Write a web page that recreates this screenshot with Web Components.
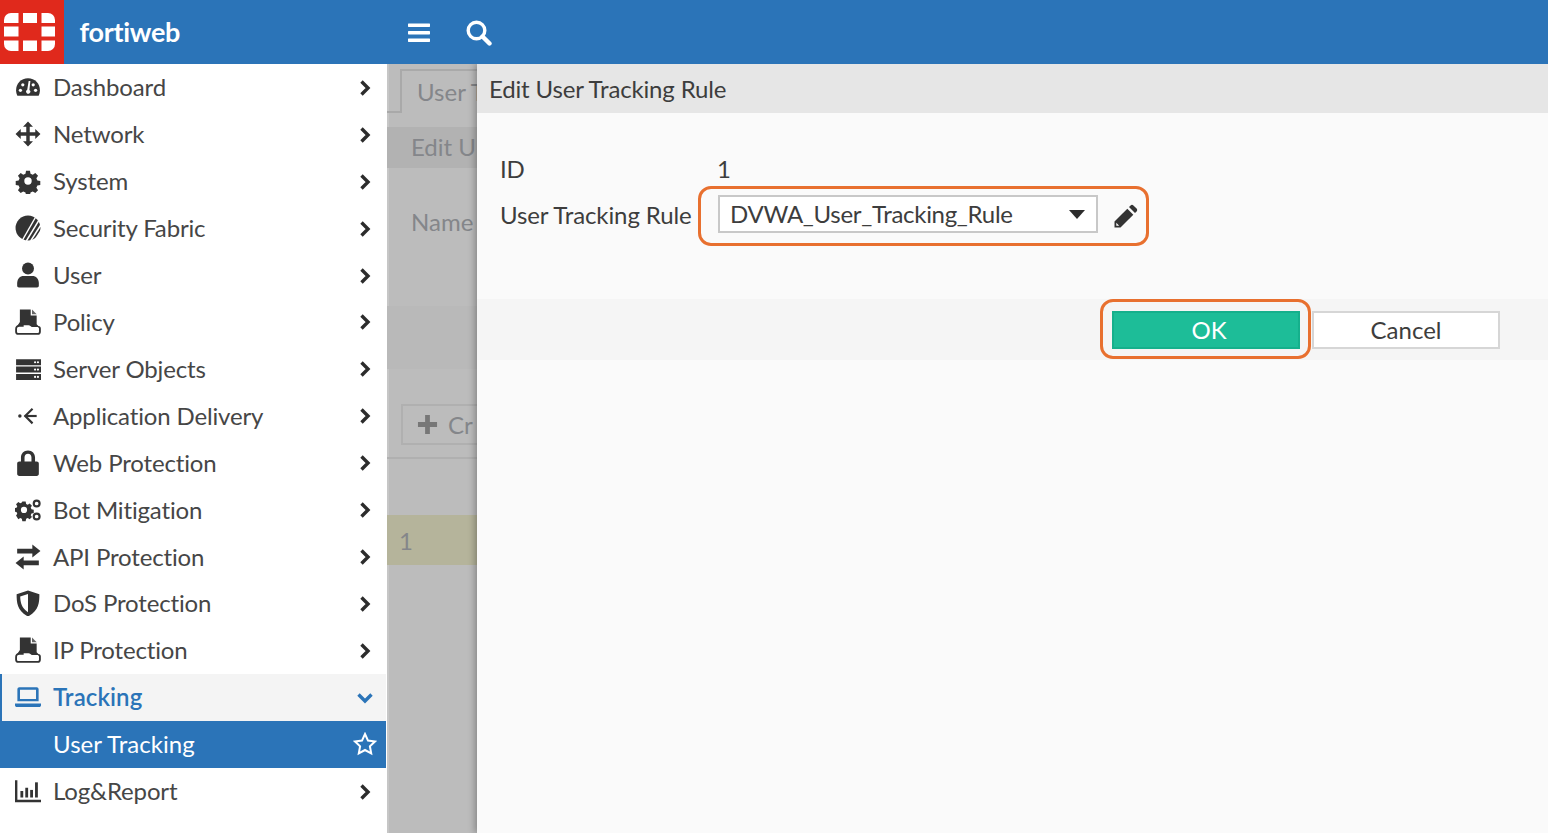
<!DOCTYPE html>
<html lang="en">
<head>
<meta charset="utf-8">
<title>FortiWeb - User Tracking</title>
<style>
  html, body { margin: 0; height: 100%; overflow: hidden; }
  body { font-family: Lato, "Liberation Sans", sans-serif; color: #3d3d3d; }
  fw-app { height: 833px; }
</style>
</head>
<body>
<fw-app>
  <fw-header slot="header">fortiweb</fw-header>
  <fw-sidebar slot="sidebar">
    <fw-nav-item icon="dashboard">Dashboard</fw-nav-item>
    <fw-nav-item icon="network">Network</fw-nav-item>
    <fw-nav-item icon="gear">System</fw-nav-item>
    <fw-nav-item icon="fabric">Security Fabric</fw-nav-item>
    <fw-nav-item icon="user">User</fw-nav-item>
    <fw-nav-item icon="policy">Policy</fw-nav-item>
    <fw-nav-item icon="server">Server Objects</fw-nav-item>
    <fw-nav-item icon="delivery">Application Delivery</fw-nav-item>
    <fw-nav-item icon="lock">Web Protection</fw-nav-item>
    <fw-nav-item icon="gears">Bot Mitigation</fw-nav-item>
    <fw-nav-item icon="exchange">API Protection</fw-nav-item>
    <fw-nav-item icon="shield">DoS Protection</fw-nav-item>
    <fw-nav-item icon="policy">IP Protection</fw-nav-item>
    <fw-nav-item icon="laptop" state="open">Tracking</fw-nav-item>
    <fw-nav-item state="current">User Tracking</fw-nav-item>
    <fw-nav-item icon="chart">Log&amp;Report</fw-nav-item>
  </fw-sidebar>
  <fw-dimmed-page slot="content"></fw-dimmed-page>
  <fw-dialog slot="content" heading="Edit User Tracking Rule">
    <fw-field label="ID"><span style="display:block;margin:-1px 0 1px">1</span></fw-field>
    <fw-field label="User Tracking Rule">
      <fw-callout>
        <fw-select>DVWA_User_Tracking_Rule</fw-select>
        <svg width="24" height="24" viewBox="0 0 24 24" style="margin:9px 0 0 16px;flex:none">
          <path fill="#333" d="M.5 17.500L13.300 4.700l6 6L6.500 23.500H.5z"/>
          <path fill="#fff" d="M2.300 18.800l2.900 2.900H2.300z"/>
          <path fill="#333" d="M15 3l1.600-1.600c.8-.8 2-.8 2.800 0l3.200 3.200c.8.8.8 2 0 2.800L21 9z"/>
        </svg>
      </fw-callout>
    </fw-field>
    <fw-button-bar slot="footer">
      <fw-callout kind="tight"><fw-button kind="primary">OK</fw-button></fw-callout>
      <fw-button>Cancel</fw-button>
    </fw-button-bar>
  </fw-dialog>
</fw-app>

<script>
const ICONS = {
  dashboard: '<path d="M12 4C5.600 4 1 9 1 15c0 2 .5 3.600 1.200 5h19.600c.7-1.400 1.200-3 1.200-5 0-6-4.600-11-11-11z"/><g fill="#fff"><circle cx="5" cy="15" r="1.500"/><circle cx="7.200" cy="10" r="1.500"/><circle cx="19" cy="15" r="1.500"/><circle cx="16.800" cy="10" r="1.500"/><path d="M12.600 6.500h1.600l-.9 8.200a1.900 1.900 0 1 1-2-.1z"/></g>',
  network: '<path d="M12 .5l4.600 4.800h-3V10.400h5.100v-3L23.500 12l-4.800 4.600v-3h-5.100v5.100h3L12 23.500l-4.600-4.800h3v-5.100H5.300v3L.5 12l4.800-4.600v3h5.100V5.300h-3z"/>',
  gear: '<path fill-rule="evenodd" d="M10 1.500h4l.6 3 2.300 1 2.600-1.700 2.800 2.800-1.700 2.600 1 2.300 3 .6v4l-3 .6-1 2.300 1.700 2.600-2.800 2.800-2.600-1.700-2.300 1-.6 3h-4l-.6-3-2.300-1-2.600 1.700-2.800-2.800 1.700-2.600-1-2.300-3-.6v-4l3-.6 1-2.300L1.700 6.600l2.800-2.800 2.600 1.700 2.300-1zM12 8.200a3.800 3.800 0 1 0 0 7.600 3.800 3.800 0 0 0 0-7.600z" transform="translate(1.200 1.200) scale(.9)"/>',
  fabric: '<circle cx="12" cy="12" r="11.500"/><g stroke="#fff" fill="none"><path d="M7 23L19 2" stroke-width="1.200"/><path d="M10.500 24L22 5" stroke-width="1.400"/><path d="M14.500 24L24 9" stroke-width="1.400"/><path d="M18.500 23L25 13" stroke-width="1.400"/></g>',
  user: '<circle cx="12" cy="6" r="5.500"/><path d="M2 20c0-4.600 2.600-7 6-7h8c3.400 0 6 2.400 6 7v2c0 1-.8 1.500-1.600 1.500H3.600C2.800 23.500 2 23 2 22z"/>',
  policy: '<path d="M4.500 .5H14.500v5.500H20v8l2.500 2.500H15.500c-1 0-1.500-1.500-3-1.500H2.500L4.500 12z"/><path d="M15.700 .5L20 4.800h-4.300z" opacity=".75"/><path fill="none" stroke="currentColor" stroke-width="1.700" d="M8 15.500H4c-1.800 0-3 1.300-3 3V21c0 1.100.8 2 2 2h18c1.200 0 2-.9 2-2v-3c0-.8-.5-1.500-1.500-1.500"/>',
  server: '<path d="M1 3h23v5.500H1zM1 9.800h23v5.500H1zM1 16.600h23v5.500H1z"/><g fill="#fff"><circle cx="18.500" cy="5.800" r="1"/><circle cx="21.200" cy="5.800" r="1"/><circle cx="18.500" cy="12.500" r="1"/><circle cx="21.200" cy="12.500" r="1"/><circle cx="18.500" cy="19.300" r="1"/><circle cx="21.200" cy="19.300" r="1"/></g>',
  delivery: '<circle cx="4.500" cy="12" r="1.600"/><rect x="9" y="11" width="11" height="2"/><path d="M15.500 4.500L8 12l7.500 7.500 1.400-1.400L10.800 12l6.100-6.100z"/>',
  lock: '<path fill-rule="evenodd" d="M12 .5C8 .5 5.500 3.500 5.500 7v3.500H4c-1.200 0-2 .8-2 2V22c0 1.200.8 2 2 2h16c1.200 0 2-.8 2-2v-9.500c0-1.200-.8-2-2-2h-1.500V7C18.500 3.500 16 .5 12 .5zm0 3c2 0 3.200 1.500 3.200 3.500v3.500H8.800V7c0-2 1.200-3.500 3.200-3.500z"/>',
  gears: '<path fill-rule="evenodd" d="M7 3h3.500l.5 2.400 1.700.8 2-1.300 2.400 2.400-1.300 2 .8 1.700 2.400.5v3.500l-2.400.5-.8 1.700 1.300 2-2.400 2.400-2-1.300-1.700.8-.5 2.400H7l-.5-2.400-1.700-.8-2 1.300L.4 17.700l1.300-2-.8-1.700-2.400-.5V10l2.400-.5.8-1.700-1.300-2L2.800 3.400l2 1.300 1.700-.8zm1.750 5.500a3.250 3.250 0 1 0 0 6.500 3.250 3.250 0 0 0 0-6.500z" transform="translate(.6 1.600) scale(.88)"/><g fill="none" stroke="currentColor" stroke-width="2"><circle cx="20" cy="6" r="2.700"/><circle cx="20" cy="18" r="2.700"/></g>',
  exchange: '<path d="M16 .5l7.500 6-7.500 6V8.800H2V4.300h14zM8 11.500v3.700h14v4.500H8v3.800l-7.500-6z"/>',
  shield: '<path fill-rule="evenodd" d="M12 .5L1.500 4c0 8 .5 15 10.500 20.500C22 19 22.500 12 22.500 4zm0 3.300V20.500C6 16.500 5 11.500 4.800 6z"/>',
  laptop: '<path fill-rule="evenodd" d="M4 3h16c1 0 1.800.8 1.800 1.800V16H2.200V4.800C2.200 3.800 3 3 4 3zm.6 2.200v8.600h14.800V5.200z"/><path d="M0 18h24v1.500c0 1-.8 1.700-1.700 1.700H1.700c-.9 0-1.700-.7-1.700-1.700z"/>',
  chart: '<path d="M0 2h2.200v18h21.800v2.400H0z"/><rect x="5" y="12" width="2.600" height="6"/><rect x="9.500" y="9" width="2.600" height="9"/><rect x="14" y="11" width="2.600" height="7"/><rect x="18.500" y="4" width="2.600" height="14"/>'
}

class FwApp extends HTMLElement {
  constructor() {
    super()
    this.attachShadow({mode: 'open'}).innerHTML = `
    <style>
      :host { display: grid; grid-template: 64px 1fr / 387px 1fr; }
      .top { grid-column: 1 / 3; display: block; }
      .side { display: block; min-height: 0; }
      .main { position: relative; min-width: 0; min-height: 0; overflow: hidden; }
    </style>
    <div class="top"><slot name="header"></slot></div>
    <div class="side"><slot name="sidebar"></slot></div>
    <div class="main"><slot name="content"></slot></div>
    `
  }
}

class FwHeader extends HTMLElement {
  constructor() {
    super()
    this.attachShadow({mode: 'open'}).innerHTML = `
    <style>
      :host { display: flex; align-items: center; height: 64px; background: #2b74b8; color: #fff; }
      .logo { width: 64px; height: 64px; background: #e0291c; display: flex; align-items: center; padding-left: 4px; box-sizing: border-box; }
      .name { width: 343px; padding-left: 15.500px; box-sizing: border-box; font: 700 27px Lato, sans-serif; letter-spacing: -.3px; margin-top: -1px; }
      .btn { display: flex; margin: 2px 35px 0 0; }
    </style>
    <div class="logo">
      <svg width="52" height="40" viewBox="0 0 52 40" fill="#fff">
        <path d="M0 8a7 7 0 0 1 7-7h7.500v10H0z"/><rect x="19" y="1" width="14" height="10"/><path d="M37.500 1H44a7 7 0 0 1 7 7v3H37.500z"/>
        <rect x="0" y="14.500" width="14.500" height="10"/><rect x="37.500" y="14.500" width="13.500" height="10"/>
        <path d="M0 28.500h14.500v10.500H7a7 7 0 0 1-7-7z"/><rect x="19" y="28.500" width="14" height="10.500"/><path d="M37.500 28.500H51v3.500a7 7 0 0 1-7 7h-6.500z"/>
      </svg>
    </div>
    <div class="name"><slot></slot></div>
    <div class="btn">
      <svg width="24" height="24" viewBox="0 0 24 24" fill="#fff"><rect x="1" y="2.500" width="22" height="3.400" rx=".6"/><rect x="1" y="10" width="22" height="3.400" rx=".6"/><rect x="1" y="17.500" width="22" height="3.400" rx=".6"/></svg>
    </div>
    <div class="btn">
      <svg width="26" height="26" viewBox="0 0 26 26" fill="none" stroke="#fff"><circle cx="10.500" cy="10.500" r="8.300" stroke-width="3.400"/><path d="M16.500 16.500l7 7" stroke-width="4.400" stroke-linecap="round"/></svg>
    </div>
    `
  }
}

class FwSidebar extends HTMLElement {
  constructor() {
    super()
    this.attachShadow({mode: 'open'}).innerHTML = `
    <style>
      :host { display: block; height: 100%; background: #fff; box-sizing: border-box; width: 386px; }
    </style>
    <slot></slot>
    `
  }
}

class FwNavItem extends HTMLElement {
  constructor() {
    super()
    const icon = ICONS[this.getAttribute('icon')] || ''
    const state = this.getAttribute('state') || ''
    let tail = '<path fill="none" stroke="currentColor" stroke-width="3.400" d="M3.500 1.500L10 8l-6.500 6.500"/>'
    let box = '0 0 14 16'
    let size = 'width="14" height="16"'
    if (state == 'open') {
      tail = '<path fill="none" stroke="currentColor" stroke-width="3.400" d="M1.500 3.500L8 10l6.500-6.500"/>'
      box = '0 0 16 14'
      size = 'width="16" height="14"'
    }
    if (state == 'current') {
      tail = '<path fill="none" stroke="currentColor" stroke-width="2" d="M12 2l3 6.600 7 .9-5.100 4.800 1.300 7.100L12 18l-6.200 3.400 1.300-7.100L2 9.500l7-.9z"/>'
      box = '0 0 24 24'
      size = 'width="24" height="24"'
    }
    this.attachShadow({mode: 'open'}).innerHTML = `
    <style>
      :host { display: block; height: 46.920px; font: 24px Lato, sans-serif; color: #464646; }
      :host([state="open"]) { color: #2b74b8; background: #f4f4f4; box-shadow: inset 2px 0 0 #2b74b8; font-weight: 600; }
      :host([state="current"]) { color: #fff; background: #2b74b8; }
      .row { display: flex; align-items: center; height: 100%; padding: 0 9px 0 15px; }
      .icon { width: 26px; height: 26px; margin-right: 12px; flex: none; color: #333; }
      :host([state="open"]) .icon { color: #2b74b8; }
      .label { flex: 1; white-space: nowrap; letter-spacing: -.15px; margin-top: -1px; }
      :host([state="open"]) .label { letter-spacing: .1px; }
      :host([state="current"]) .label { letter-spacing: .05px; }
      .tail { width: 24px; display: flex; justify-content: center; color: #2c2c2c; margin-top: 1px; }
      :host([state="open"]) .tail { color: #2b74b8; }
      :host([state="current"]) .tail { color: #fff; margin-top: 0; }
    </style>
    <div class="row">
      <svg class="icon" viewBox="0 0 24 24" fill="currentColor">${icon}</svg>
      <span class="label"><slot></slot></span>
      <span class="tail"><svg ${size} viewBox="${box}">${tail}</svg></span>
    </div>
    `
  }
}

class FwDimmedPage extends HTMLElement {
  constructor() {
    super()
    this.attachShadow({mode: 'open'}).innerHTML = `
    <style>
      :host { display: block; height: 100%; background: #bcbcbc; color: #84868a; font: 24px Lato, sans-serif; overflow: hidden; box-shadow: inset 2px 0 0 #c6c6c6; white-space: nowrap; }
      .tabs { height: 49px; display: flex; align-items: flex-end; }
      .stub { width: 13px; border-bottom: 2px solid #a9a9a9; }
      .tab { border: 2px solid #a9a9a9; border-width: 2px 0 0 2px; height: 44px; padding-left: 15px; width: 120px; box-sizing: border-box; line-height: 42px; }
      .title { margin-top: 14px; height: 41px; line-height: 39px; background: #b2b2b2; padding-left: 24px; }
      .name { margin-top: 36px; padding-left: 24px; height: 38px; line-height: 36px; }
      .band { margin-top: 64px; height: 63px; background: #b9b9b9; }
      .bar { height: 90px; border-bottom: 2px solid #b0b0b0; padding: 35px 0 0 14px; box-sizing: border-box; }
      .create { display: flex; align-items: center; gap: 10px; height: 41px; width: 140px; border: 2px solid #b0b0b0; padding-left: 14px; box-sizing: border-box; }
      .create svg { flex: none; }
      .rowone { margin-top: 56px; height: 50px; line-height: 52px; background: #b5b49b; padding-left: 12px; }
    </style>
    <div class="tabs"><div class="stub"></div><div class="tab">User T</div></div>
    <div class="title">Edit U</div>
    <div class="name">Name</div>
    <div class="band"></div>
    <div class="bar"><div class="create">
      <svg width="21" height="21" viewBox="0 0 22 22" fill="#777"><path d="M8.500 1h5v7.500H21v5h-7.500V21h-5v-7.500H1v-5h7.500z"/></svg>
      <span>Cr</span>
    </div></div>
    <div class="rowone">1</div>
    `
  }
}

class FwDialog extends HTMLElement {
  constructor() {
    super()
    this.attachShadow({mode: 'open'}).innerHTML = `
    <style>
      :host { display: block; position: absolute; top: 0; right: 0; bottom: 0; left: 89.500px; background: #fafafa; box-shadow: -2px 0 7px rgba(0,0,0,.3); font: 24px Lato, sans-serif; color: #3d3d3d; }
      h1 { margin: 0; height: 49px; background: #e6e6e6; font: inherit; line-height: 49px; padding-left: 12.500px; letter-spacing: -.15px; }
      .body { padding: 45px 0 0 23.500px; height: 186px; box-sizing: border-box; display: grid; align-content: start; gap: 4px; }
    </style>
    <h1>${this.getAttribute('heading')}</h1>
    <div class="body"><slot></slot></div>
    <slot name="footer"></slot>
    `
  }
}

class FwField extends HTMLElement {
  constructor() {
    super()
    this.attachShadow({mode: 'open'}).innerHTML = `
    <style>
      :host { display: flex; align-items: center; line-height: 24px; }
      label { width: 217px; white-space: nowrap; flex: none; letter-spacing: -.1px; margin-top: -2px; }
    </style>
    <label>${this.getAttribute('label')}</label>
    <div><slot></slot></div>
    `
  }
}

class FwCallout extends HTMLElement {
  constructor() {
    super()
    this.attachShadow({mode: 'open'}).innerHTML = `
    <style>
      :host { display: flex; align-items: flex-start; border: 3px solid #e8702f; border-radius: 13px; padding: 6px 0 0 17px; margin-left: -19px; height: 60px; box-sizing: border-box; width: 451px; }
      :host([kind="tight"]) { padding: 9px 0 0 9px; margin: 0; width: 211px; }
    </style>
    <slot></slot>
    `
  }
}

class FwSelect extends HTMLElement {
  constructor() {
    super()
    this.attachShadow({mode: 'open'}).innerHTML = `
    <style>
      :host { display: flex; align-items: center; justify-content: space-between; width: 380px; height: 38px; border: 2px solid #c8c8c8; background: #fff; box-sizing: border-box; padding: 0 11px 0 10px; flex: none; }
      span { letter-spacing: -.3px; }
    </style>
    <span><slot></slot></span>
    <svg width="16" height="9" viewBox="0 0 16 9" fill="#2c2c2c"><path d="M0 0h16L8 9z"/></svg>
    `
  }
}

class FwButtonBar extends HTMLElement {
  constructor() {
    super()
    this.attachShadow({mode: 'open'}).innerHTML = `
    <style>
      :host { display: flex; align-items: flex-start; height: 61px; background: #f5f5f5; padding-left: 623.500px; }
      ::slotted(fw-button) { margin-top: 12px; }
    </style>
    <slot></slot>
    `
  }
}

class FwButton extends HTMLElement {
  constructor() {
    super()
    this.attachShadow({mode: 'open'}).innerHTML = `
    <style>
      :host { display: flex; align-items: center; justify-content: center; width: 188px; height: 38px; box-sizing: border-box; border: 2px solid #d6d6d6; background: #fff; color: #3d3d3d; flex: none; margin-left: 1px; padding-bottom: 2px; }
      :host([kind="primary"]) { background: #1dbd98; border-color: #15b08c; color: #fff; margin: 0; padding-left: 6px; }
    </style>
    <slot></slot>
    `
  }
}

customElements.define('fw-app', FwApp)
customElements.define('fw-header', FwHeader)
customElements.define('fw-sidebar', FwSidebar)
customElements.define('fw-nav-item', FwNavItem)
customElements.define('fw-dimmed-page', FwDimmedPage)
customElements.define('fw-dialog', FwDialog)
customElements.define('fw-field', FwField)
customElements.define('fw-callout', FwCallout)
customElements.define('fw-select', FwSelect)
customElements.define('fw-button-bar', FwButtonBar)
customElements.define('fw-button', FwButton)
</script>
</body>
</html>
